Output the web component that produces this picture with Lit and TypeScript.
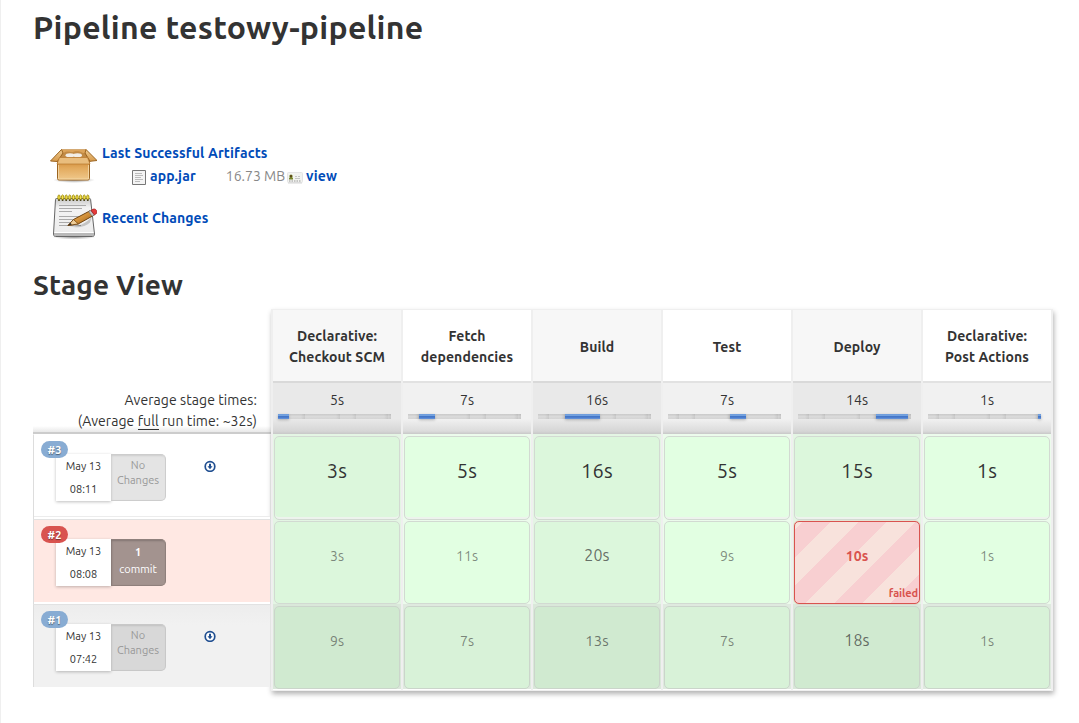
import { LitElement, html, css, svg, nothing } from "lit";
import { customElement, property } from "lit/decorators.js";
import { classMap } from "lit/directives/class-map.js";

interface Cell { time: string; size: "s" | "m" | "l" | "xl"; failed?: boolean }
interface Run { id: string; date: string; time: string; commits?: number; artifacts: boolean; status: string; cells: Cell[] }

const stages = [
  { name: ["Declarative:", "Checkout SCM"], avg: "5s" },
  { name: ["Fetch", "dependencies"], avg: "7s" },
  { name: ["Build"], avg: "16s" },
  { name: ["Test"], avg: "7s" },
  { name: ["Deploy"], avg: "14s" },
  { name: ["Declarative:", "Post Actions"], avg: "1s" },
];
const segments = [11, 16, 35, 16, 32, 3];

const cells = (spec: string): Cell[] =>
  spec.split(" ").map((part) => {
    const [time, size, failed] = part.split("/");
    return { time, size: size as Cell["size"], failed: failed === "f" };
  });

const runs: Run[] = [
  { id: "#3", date: "May 13", time: "08:11", artifacts: true, status: "latest", cells: cells("3s/xl 5s/xl 16s/xl 5s/xl 15s/xl 1s/xl") },
  { id: "#2", date: "May 13", time: "08:08", commits: 1, artifacts: false, status: "failure", cells: cells("3s/s 11s/s 20s/l 9s/s 10s/s/f 1s/s") },
  { id: "#1", date: "May 13", time: "07:42", artifacts: true, status: "older", cells: cells("9s/s 7s/s 13s/m 7s/s 18s/l 1s/s") },
];

const packageIcon = html`<svg width="48" height="48" viewBox="0 1 48 48">
  <defs>
    <linearGradient id="front" x1="0" y1="0" x2="0" y2="1"><stop offset="0" stop-color="#cf8c3a"/><stop offset=".35" stop-color="#e2a95c"/><stop offset="1" stop-color="#f0c98c"/></linearGradient>
    <linearGradient id="flap" x1="0" y1="0" x2="0" y2="1"><stop offset="0" stop-color="#eecb92"/><stop offset="1" stop-color="#d79a4a"/></linearGradient>
    <radialGradient id="ground"><stop offset="0" stop-color="#000" stop-opacity=".4"/><stop offset="1" stop-color="#000" stop-opacity="0"/></radialGradient>
  </defs>
  <ellipse cx="25" cy="40" rx="21" ry="3" fill="url(#ground)"/>
  <path d="M12 10h25l4 10H8z" fill="#b67a32" stroke="#98601c"/>
  <path d="M13.500 12h22l2.500 6H11z" fill="#c18a45"/>
  <ellipse cx="21" cy="15.200" rx="4.500" ry="2" fill="#f2eee6"/><ellipse cx="28.500" cy="15.200" rx="4.500" ry="2" fill="#f2eee6"/>
  <path d="M12.500 9.500h25l1.500 3.500H34c-2-1.500-4-1.500-6-1.500-3 0-4 1-6 .6-3-.7-6-.6-7.500.9H11z" fill="#dca45a"/>
  <path d="M12.500 9.500L1.500 21l7 .5L14 13z" fill="url(#flap)" stroke="#9b6420"/>
  <path d="M37 9.500L48 20.500l-7 .8L36 13z" fill="url(#flap)" stroke="#9b6420"/>
  <path d="M8.500 21h32v17.500q0 1.500-1.500 1.500H10q-1.500 0-1.500-1.500z" fill="url(#front)" stroke="#9b6420"/>
  <path d="M10.500 17.500h28l2.500 6.500h-33z" fill="#e9bd7d" stroke="#b9792e" stroke-width=".7"/>
  <path d="M9.500 25v14h30V25" fill="none" stroke="#f6dcae" opacity=".8"/>
</svg>`;

const notepadIcon = html`<svg width="48" height="48" viewBox="0 0 48 48">
  <defs>
    <linearGradient id="paper" x1="0" y1="0" x2="0" y2="1"><stop offset="0" stop-color="#c8c8c8"/><stop offset=".25" stop-color="#f3f3f3"/><stop offset="1" stop-color="#ececec"/></linearGradient>
    <linearGradient id="wood" x1="0" y1="0" x2="1" y2="1"><stop offset="0" stop-color="#f1c477"/><stop offset=".5" stop-color="#d3913a"/><stop offset="1" stop-color="#8d5513"/></linearGradient>
    <radialGradient id="shade"><stop offset="0" stop-color="#000" stop-opacity=".4"/><stop offset="1" stop-color="#000" stop-opacity="0"/></radialGradient>
  </defs>
  <ellipse cx="25" cy="45" rx="22" ry="2.500" fill="url(#shade)"/>
  <path d="M7.500 6.500h33q1 0 1.100 1L45.500 42q0 2.500-2 2.500h-37q-2 0-2-2.500L6.500 7.500q0-1 1-1z" fill="url(#paper)" stroke="#666"/>
  <path d="M5 41h40v1.200q0 1.800-1.500 1.800h-37Q5 44 5 42.200z" fill="#b9b9b9"/>
  <path d="M5.500 40.500h39" stroke="#fff"/>
  ${Array.from({ length: 9 }, (_, i) => svg`<g transform="translate(${10 + i * 3.6} 1)"><ellipse cx="0" cy="4.500" rx="1.200" ry="2.600" fill="#f4e34a" stroke="#a08b08" stroke-width=".9"/><circle cx="0" cy="7.200" r=".9" fill="#4b4520"/></g>`)}
  <path d="M10 13.500h27M10 16.500h23M10 19.500h13M10 24.500h22M10 27.500h15M10 30.500h11M10 33.500h22" stroke="#aaa"/>
  <path d="M20 34.500c9 .3 17-2.500 23-10l-2 6c-4 4-12 6-21 4z" fill="#000" opacity=".18"/>
  <path d="M19 33.500l5.500-6L41 18.800l3.800 4.500-15.500 8.600z" fill="url(#wood)" stroke="#70430f"/>
  <path d="M19 33.500l5.500-6 4.800 4.400z" fill="#efce99" stroke="#70430f" stroke-width=".8"/>
  <path d="M19 33.500l2.500-2.600 1.300 1.700z" fill="#222"/>
  <path d="M39.500 19.600l2.200-1.100 3.800 4.400-2.400 1.300z" fill="#c5c5c5" stroke="#666" stroke-width=".6"/>
  <path d="M42 18.300l2.400-1.200c2.600-.6 4.500 2.300 3 4.500l-2 1.300z" fill="#e43b3b" stroke="#a01818" stroke-width=".7"/>
</svg>`;

const fileIcon = html`<svg width="16" height="16" viewBox="0 0 16 16"><path d="M1.500 1.500h13v14h-13z" fill="#f4f4f4" stroke="#777"/><path d="M4 4.500h7M4 6.500h8M4 8.500h6M4 10.500h8M4 12.500h5" stroke="#bcbcbc"/></svg>`;

const fingerprintIcon = html`<svg width="16" height="16" viewBox="0 0 16 16"><rect x=".5" y="3.500" width="15" height="10" rx="1" fill="#f2f3f0" stroke="#e4e4e4"/><path d="M2 10.500h4V9.100L5.200 8.600l.5-1.500Q5.500 5.500 4 5.500T2.300 7.100l.5 1.500L2 9.100z" fill="#77862a"/><circle cx="4" cy="7.200" r="1.100" fill="#5c4318"/><path d="M8 7.500h2M11 7.500h2M8 9.500h5" stroke="#c5c5c5"/><path d="M2 12h1.500m1 0H6m1 0h1.500m1 0H11m1 0h1.500" stroke="#999"/><path d="M1 14h14" stroke="#d6d6d6"/></svg>`;

const downloadIcon = html`<svg width="12" height="12" viewBox="0 -.5 12 12"><circle cx="6" cy="6" r="4.800" fill="#fff" stroke="#204f91" stroke-width="1.700"/><path d="M5 3.300h2v2.500h1.500L6 8.700 3.500 5.800H5z" fill="#204f91"/></svg>`;

@customElement("stage-progress")
class StageProgress extends LitElement {
  @property({ type: Number }) active = 0;
  static styles = css`
    :host { display: flex; width: 113px; height: 5px; }
    .seg { height: 5px; background: linear-gradient(to left, rgba(0, 0, 0, .07), transparent 4px), linear-gradient(#c9c9c9, #dadada 50%, #d4d4d4); }
    .on { background: linear-gradient(#6c9bdc, #75a3df 38%, #4476c8 42%, #4476c8 62%, #6a98dd); box-shadow: 0 1px 3px rgba(0, 0, 0, .25); z-index: 1; }
  `;
  render() {
    return segments.map((w, i) => html`<div class=${classMap({ seg: true, on: i === this.active })} style="width:${w}px"></div>`);
  }
}

@customElement("app-root")
class AppRoot extends LitElement {
  static styles = css`
    :host { display: block; box-sizing: border-box; height: 723px; overflow: hidden; border-left: 1px solid #efefef; padding: 10px 0 0 32px; background: #fff; color: #333; font: 14px/21px Ubuntu, "Noto Sans", sans-serif; letter-spacing: .1px; }
    *, *::before { box-sizing: border-box; }
    h1, h2 { margin: 0; font-weight: 700; white-space: nowrap; }
    h1 { font-size: 32px; line-height: 34px; letter-spacing: .27px; }
    h2 { font-size: 28px; line-height: 32px; letter-spacing: .17px; margin-top: 26px; }
    a { color: #004bb8; font-weight: 700; }
    svg { display: block; flex: none; }
    .summary { margin: 97px 0 0 16px; height: 102px; display: grid; grid-template-columns: 48px 1fr; grid-template-rows: 51px 51px; column-gap: 5px; }
    .artifacts { padding-top: 2px; letter-spacing: .15px; }
    .files { display: flex; align-items: center; height: 21px; margin: 2px 0 0 29px; }
    .files a { margin-left: 3px; }
    .size { color: #888; margin: 0 2px 0 30px; letter-spacing: 0; }
    .changes-link { padding-top: 16px; }

    .view { display: flex; width: 1020px; margin-top: 8px; }
    .runs { width: 238px; }
    .average { height: 125px; padding: 81px 14px 0 0; text-align: right; letter-spacing: .08px; border-bottom: 2px solid #ccc; background: linear-gradient(transparent 117px, #e8e8e8); }
    .average u { text-decoration: none; border-bottom: 1px solid #333; }
    .run { height: 85px; display: flex; align-items: flex-start; border-left: 1px solid #ddd; border-top: 1px solid #e2e2e2; border-right: 1px solid #ddd; position: relative; padding: 19px 0 0 22px; font-size: 11px; letter-spacing: 0; background-clip: padding-box; }
    .run.latest { border-top-color: transparent; box-shadow: inset 0 -2px #fff, inset 0 -3px #ececec; }
    .run.failure { background-color: #ffe8e3; box-shadow: inset 0 -2px #fff; }
    .run.older { height: 83px; background: linear-gradient(#ededed, #f1f1f1 20px); border-right-color: #e4e4e4; }
    .badge { position: absolute; left: 7px; top: 6px; width: 27px; height: 17px; border-radius: 9px; background: #88acd3; color: #fff; font-weight: 700; line-height: 18px; text-align: center; text-shadow: 0 1px 1px rgba(0, 0, 0, .45); }
    .failure .badge { background: #d9534f; }
    .date { width: 55px; height: 47px; padding-top: 1px; background: #fff; text-align: center; line-height: 23px; box-shadow: 0 1px 3px rgba(0, 0, 0, .25); }
    .commits { width: 55px; height: 47px; border: 1px solid #cdcdcd; border-left: 0; border-radius: 0 5px 5px 0; background: #e4e4e4; color: #999; text-align: center; line-height: 15px; padding-top: 3px; box-shadow: inset 1px 1px 2px rgba(0, 0, 0, .1); }
    .older .commits { background: #d8d8d8; border-color: #c8c8c8; }
    .failure .commits { background: #a3938f; border-color: #8f807c; color: #fff; line-height: 17px; padding-top: 4px; box-shadow: inset 1px 1px 2px rgba(0, 0, 0, .2); }
    .artifact-link { margin: 6px 0 0 38px; }

    .stages { width: 782px; height: 382px; border: 1px solid #efefef; box-shadow: 1px 3px 5px rgba(0, 0, 0, .3); display: grid; grid-template-columns: repeat(6, 130px); background: #fff; }
    .stage { border: solid #efefef; border-width: 0 1px; }
    .head { height: 71px; display: flex; flex-direction: column; justify-content: center; text-align: center; font-weight: 700; background: #fff; padding-top: 3px; }
    .stage:nth-child(odd) .head { background: #f7f7f7; }
    .stat { height: 53px; border-top: 2px solid #e2e2e2; background: linear-gradient(#f1f1f1 36px, #dcdcdc 48px, #c8c8c8); display: flex; flex-direction: column; align-items: center; text-align: center; padding-top: 7px; }
    .stage:nth-child(odd) .stat { background: linear-gradient(#e9e9e9 36px, #d6d6d6 48px, #c8c8c8); border-top-color: #d9d9d9; }
    .stat span { height: 21px; }
    stage-progress { align-self: flex-start; margin: 3px 0 0 5px; }
    .cell { height: 85px; padding: 2px 1px; background: #ecfbec; }
    .box { height: 84px; border: 1px solid #d2dad2; border-radius: 5px; background: #e2ffe2; text-align: center; padding-top: 24px; position: relative; font-size: 14px; line-height: 21px; color: rgba(51, 51, 51, .58); }
    .stage:nth-child(odd) .box { background: #dcf7dc; }
    .stage:nth-child(odd) .cell { background: #e4f5e4; }
    .latest .box { box-shadow: inset 0 -2px #edf3ed; }
    .failure .box, .older .box { height: 83px; }
    .cell.older { background: #dfeadf; }
    .older .box { background: #d8f2d8; border-color: #cbd5cb; }
    .stage:nth-child(odd) .cell.older { background: #dae8da; }
    .stage:nth-child(odd) .older .box { background: #d0ead0; }
    .box.m, .box.l, .box.xl { padding-top: 23px; }
    .m { font-size: 14.800px; color: rgba(51, 51, 51, .65); }
    .l { font-size: 16px; color: rgba(51, 51, 51, .7); }
    .xl { font-size: 20px; color: #333; letter-spacing: .3px; }
    .stage .cell .box.failed { border: 1px solid #d9534f; box-shadow: 0 0 1px #d9534f; color: #d9534f; font-weight: 700; background: repeating-linear-gradient(135deg, #f8e2dc 0 5px, #f8cfd1 5px 25px, #f8e2dc 25px 40px); }
    .note { position: absolute; right: 1px; bottom: 2px; font-size: 11px; line-height: 15px; font-weight: 700; letter-spacing: -.1px; }
  `;

  private runRow(run: Run) {
    return html`<div class="run ${run.status}">
      <div class="date"><div>${run.date}</div><div>${run.time}</div></div>
      <div class="commits">${run.commits ? html`<b>${run.commits}</b><br>commit` : html`No<br>Changes`}</div>
      <div class="badge">${run.id}</div>
      ${run.artifacts ? html`<div class="artifact-link">${downloadIcon}</div>` : nothing}
    </div>`;
  }

  private stageColumn(index: number) {
    const stage = stages[index];
    return html`<div class="stage">
      <div class="head">${stage.name.map((line) => html`<div>${line}</div>`)}</div>
      <div class="stat"><span>${stage.avg}</span><stage-progress .active=${index}></stage-progress></div>
      ${runs.map((run) => {
        const cell = run.cells[index];
        return html`<div class="cell ${run.status}"><div class="box ${cell.size} ${cell.failed ? "failed" : ""}">${cell.time}${cell.failed ? html`<span class="note">failed</span>` : nothing}</div></div>`;
      })}
    </div>`;
  }

  render() {
    return html`
      <h1>Pipeline testowy-pipeline</h1>
      <div class="summary">
        ${packageIcon}
        <div class="artifacts"><a>Last Successful Artifacts</a>
          <div class="files">${fileIcon}<a>app.jar</a><span class="size">16.73 MB</span>${fingerprintIcon}<a>view</a></div>
        </div>
        ${notepadIcon}
        <div class="changes-link"><a>Recent Changes</a></div>
      </div>
      <h2>Stage View</h2>
      <div class="view">
        <div class="runs">
          <div class="average">Average stage times:<br>(Average <u>full</u> run time: ~32s)</div>
          ${runs.map((run) => this.runRow(run))}
        </div>
        <div class="stages">${stages.map((_, i) => this.stageColumn(i))}</div>
      </div>`;
  }
}
